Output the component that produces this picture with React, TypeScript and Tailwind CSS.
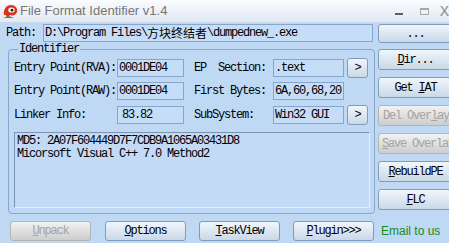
import React from "react";

const mono = { fontFamily: '"Liberation Mono", "Noto Sans CJK SC", monospace' };

function Btn({
  children,
  disabled,
  className = "",
}: {
  children: React.ReactNode;
  disabled?: boolean;
  className?: string;
}) {
  return (
    <div
      className={
        "flex items-center justify-center rounded-[3px] border text-[12px] leading-[12px] tracking-[-1.2px] " +
        (disabled
          ? "border-[#b4b4b4] bg-linear-to-b from-[#f2f2f2] to-[#cdcdcd] text-[#a3a3a3] "
          : "border-[#7f9cbd] bg-linear-to-b from-[#f1f6fb] to-[#c9d8e8] text-black ") +
        className
      }
    >
      {children}
    </div>
  );
}

function Field({ children, className = "" }: { children?: React.ReactNode; className?: string }) {
  return (
    <div
      className={
        "flex h-[18px] items-center whitespace-nowrap border border-[#86a6cf] bg-[#c6ddf8] pl-[1px] text-[12px] leading-[12px] tracking-[-1.2px] text-black " +
        className
      }
    >
      {children}
    </div>
  );
}

export default function App() {
  return (
    <div
      className="relative h-[243px] w-[449px] overflow-hidden bg-[#bfd8f4] text-black"
      style={mono}
    >
      {/* Title bar */}
      <div className="flex h-[23px] items-center border-b border-[#cdd9e8] bg-linear-to-b from-[#fbfcfe] to-[#e1e9f4]">
        <svg width="17" height="16" viewBox="0 0 17 16" className="ml-[2px]">
          <path d="M2 12 C1 7 4 2 9 2 C13 2 16 5 15 9 C14 12 11 13 8 12 L5 15 L4 12 Z" fill="#d8331c" />
          <ellipse cx="9.5" cy="7" rx="3.2" ry="2.6" fill="#fff" />
          <circle cx="10" cy="7.2" r="1.4" fill="#222" />
          <path d="M1 15 L7 13 L12 15 Z" fill="#8a6a4a" />
        </svg>
        <span
          className="ml-[1px] text-[13px] text-[#767676]"
          style={{ fontFamily: '"Liberation Sans", Arial, sans-serif' }}
        >
          File Format Identifier v1.4
        </span>
        <div className="ml-auto flex items-center">
          <div className="mt-[6px] h-[2px] w-[8px] bg-[#5e5e5e]" />
          <div className="ml-[17px] h-[7px] w-[9px] border border-t-2 border-[#a8a8a8]" />
          <span
            className="ml-[11px] text-[14px] text-[#8a8a8a]"
            style={{ fontFamily: '"Liberation Sans", Arial, sans-serif' }}
          >
            X
          </span>
        </div>
      </div>

      {/* Main area */}
      <div className="flex h-[191px]">
        {/* Left column */}
        <div className="w-[375px]">
          <div className="mt-[1px] flex h-[18px] items-center">
            <span className="ml-[6px] w-[37px] text-[12px] tracking-[-1.2px]">Path:</span>
            <Field className="w-[330px]">
              <span>D:\Program Files\</span>
              <span className="tracking-normal" style={{ fontFamily: '"Noto Sans CJK SC", sans-serif' }}>
                方块终结者
              </span>
              <span>\dumpednew_.exe</span>
            </Field>
          </div>

          <fieldset className="ml-[8px] mt-[1px] h-[171px] w-[367px] rounded-[4px] border border-[#8ba6c8] pl-[5px]">
            <legend className="ml-[4px] px-[1px] text-[12px] leading-[12px] tracking-[-1.2px]">
              Identifier
            </legend>

            {/* Row 1 */}
            <div className="mt-[3px] flex h-[20px] items-center">
              <span className="w-[103px] text-[12px] tracking-[-1.2px]">Entry Point(RVA):</span>
              <Field className="w-[67px]">0001DE04</Field>
              <span className="ml-[10px] w-[79px] whitespace-pre text-[12px] tracking-[-1.2px]">EP  Section:</span>
              <Field className="w-[71px]">.text</Field>
              <Btn className="ml-[3px] h-[20px] w-[21px]">&gt;</Btn>
            </div>

            {/* Row 2 */}
            <div className="mt-[3px] flex h-[20px] items-center">
              <span className="w-[103px] text-[12px] tracking-[-1.2px]">Entry Point(RAW):</span>
              <Field className="w-[67px]">0001DE04</Field>
              <span className="ml-[10px] w-[79px] text-[12px] tracking-[-1.2px]">First Bytes:</span>
              <Field className="w-[71px]">6A,60,68,20</Field>
            </div>

            {/* Row 3 */}
            <div className="mt-[4px] flex h-[20px] items-center">
              <span className="w-[103px] text-[12px] tracking-[-1.2px]">Linker Info:</span>
              <Field className="w-[67px] pl-[4px]">83.82</Field>
              <span className="ml-[10px] w-[79px] text-[12px] tracking-[-1.2px]">SubSystem:</span>
              <Field className="w-[71px]">Win32 GUI</Field>
              <Btn className="ml-[3px] h-[20px] w-[21px]">&gt;</Btn>
            </div>

            {/* Text area */}
            <div className="mt-[7px] flex h-[76px] w-[356px] flex-col border border-b-[#e6eef8] border-l-[#7d93ad] border-r-[#e6eef8] border-t-[#7d93ad] bg-[#c2daf6] pl-[2px] pt-[2px] text-[12px] tracking-[-1.2px]">
              <span className="h-[12px] leading-[12px]">MD5: 2A07F604449D7F7CDB9A1065A03431D8</span>
              <span className="mt-[1px] h-[12px] leading-[12px]">Micorsoft Visual C++ 7.0 Method2</span>
            </div>
          </fieldset>
        </div>

        {/* Right column */}
        <div className="flex flex-col pl-[3px]">
          <Btn className="mt-[1px] h-[19px] w-[75px]">...</Btn>
          <Btn className="mt-[6px] h-[21px] w-[75px]">
            <u>D</u>ir...
          </Btn>
          <Btn className="mt-[7px] h-[21px] w-[75px]">
            Get&nbsp;<u>I</u>AT
          </Btn>
          <Btn disabled className="mt-[7px] h-[21px] w-[75px] justify-start pl-[4px]">
            <span className="whitespace-nowrap">
              Del Over<u>l</u>ay
            </span>
          </Btn>
          <Btn disabled className="mt-[7px] h-[21px] w-[75px] justify-start pl-[3px]">
            <span className="whitespace-nowrap">
              <u>S</u>ave Overlay
            </span>
          </Btn>
          <Btn className="mt-[7px] h-[21px] w-[75px]">
            <u>R</u>ebuildPE
          </Btn>
          <Btn className="mt-[7px] h-[21px] w-[75px]">
            <u>F</u>LC
          </Btn>
        </div>
      </div>

      {/* Bottom row */}
      <div className="mt-[7px] flex items-center pl-[10px]">
        <Btn disabled className="h-[20px] w-[81px]">
          <u>U</u>npack
        </Btn>
        <Btn className="ml-[14px] h-[20px] w-[81px]">
          <u>O</u>ptions
        </Btn>
        <Btn className="ml-[13px] h-[20px] w-[81px]">
          <u>T</u>askView
        </Btn>
        <Btn className="ml-[13px] h-[20px] w-[81px]">
          <u>P</u>lugin&gt;&gt;&gt;
        </Btn>
        <span
          className="ml-[7px] text-[12px] text-[#1a8a1a]"
          style={{ fontFamily: '"Liberation Sans", Arial, sans-serif' }}
        >
          Email to us
        </span>
      </div>
    </div>
  );
}
